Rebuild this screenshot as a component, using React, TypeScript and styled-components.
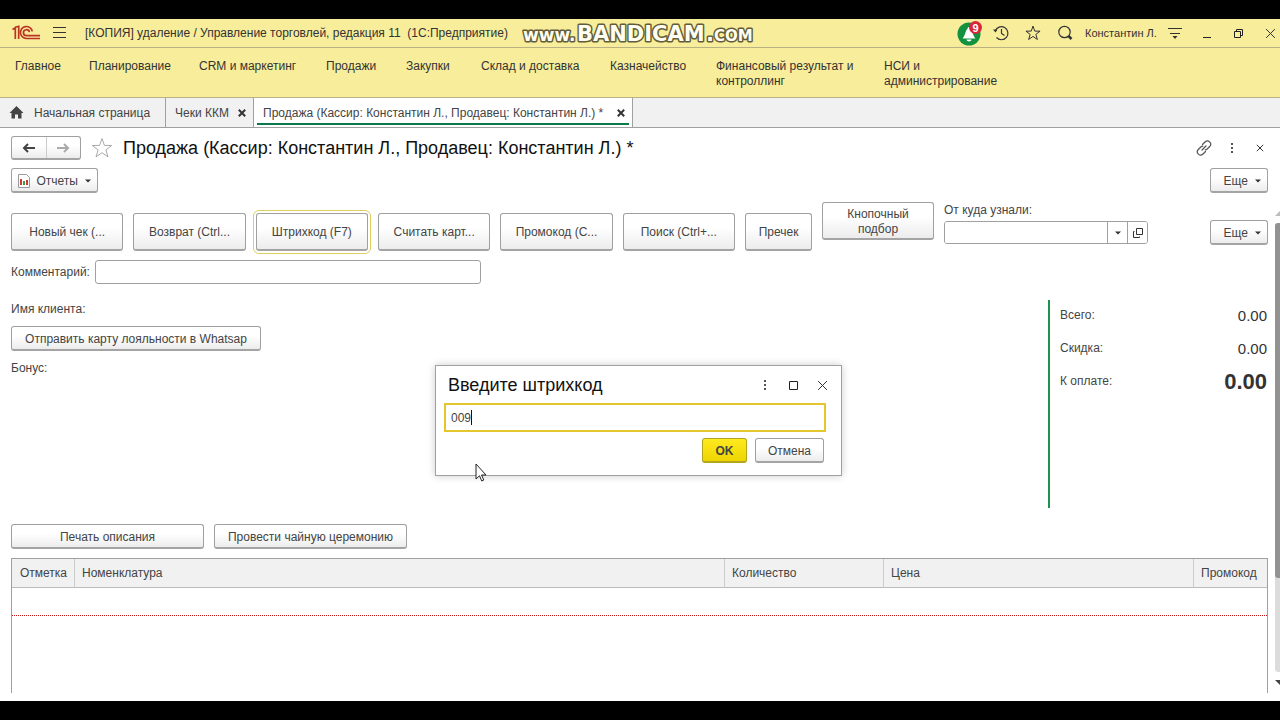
import React from 'react';
import styled, { createGlobalStyle, css } from 'styled-components';

const line = '#a0a0a0';

const Global = createGlobalStyle`
  * { box-sizing: border-box; }
  body { margin: 0; background: #000; }
  body, button, input { font-family: "Liberation Sans", Arial, sans-serif; font-size: 12px; line-height: 15px; color: #444; }
  a { color: inherit; text-decoration: none; }
  svg { display: block; flex: none; }
`;

const Screen = styled.div`
  height: 100vh;
  padding: 19px 0;
  display: flex;
  flex-direction: column;
  overflow: hidden;
`;

const Titlebar = styled.header`
  position: relative;
  display: flex;
  flex: none;
  align-items: center;
  height: 29px;
  padding-left: 12px;
  background: #f8ed9b;
  border-bottom: 1px solid #b9b184;
  color: #333;
`;
const IconButton = styled.button<{ $w?: number; $edge?: boolean }>`
  display: flex;
  flex: none;
  align-items: center;
  justify-content: ${p => (p.$edge ? 'flex-end' : 'center')};
  width: ${p => p.$w ?? 32}px;
  height: 24px;
  padding: 0 ${p => (p.$edge ? 4 : 0)}px 0 0;
  border: 0;
  background: none;
  color: #333;
`;
const AppName = styled.div`
  flex: 1;
  padding: 1px 0 0 7px;
  white-space: pre;
`;
const Watermark = styled.div`
  position: absolute;
  left: 522px;
  top: 2px;
`;
const User = styled.div`
  width: 78px;
  padding-left: 4px;
  font-size: 11px;
  white-space: nowrap;
`;

const Sections = styled.nav`
  display: grid;
  grid-template-columns: 74px 110px 127px 80px 75px 129px 106px 168px 1fr;
  height: 50px;
  flex: none;
  padding: 11px 15px 0;
  background: #f8ed9b;
  border-bottom: 1px solid #b9b184;
  color: #333;
`;
const Section = styled.a`
  white-space: pre;
`;

const Tabs = styled.div`
  display: flex;
  flex: none;
  height: 30px;
  background: #f1f1f1;
  border-bottom: 1px solid ${line};
`;
const Tab = styled.div<{ $w: number; $active?: boolean; $home?: boolean }>`
  position: relative;
  display: flex;
  align-items: center;
  justify-content: ${p => (p.$home ? 'flex-start' : 'space-between')};
  gap: 9px;
  min-width: ${p => p.$w}px;
  padding: 1px 7px 0 9px;
  border-right: 1px solid ${line};
  white-space: nowrap;
  ${p => p.$active && css`
    background: #fff;
    &::after { content: ''; position: absolute; left: 3px; right: 3px; bottom: 2px; height: 2px; background: #0a7a4a; }
  `}
`;

const Page = styled.main`
  position: relative;
  flex: 1;
  min-height: 0;
  display: flex;
  flex-direction: column;
  background: #fff;
  padding: 8px 12px 8px 11px;
`;
const Row = styled.div<{ $gap?: number; $mt?: number }>`
  display: flex;
  flex: none;
  align-items: center;
  gap: ${p => p.$gap ?? 10}px;
  margin-top: ${p => p.$mt ?? 0}px;
`;
const Spacer = styled.div`flex: 1;`;

const Button = styled.button<{ $w?: number; $tall?: boolean; $primary?: boolean; $focus?: boolean; $menu?: boolean }>`
  display: flex;
  flex: none;
  align-items: center;
  justify-content: ${p => (p.$menu ? 'flex-end' : 'center')};
  gap: 7px;
  width: ${p => (p.$w ? p.$w + 'px' : 'auto')};
  height: ${p => (p.$tall ? 38 : 25)}px;
  padding: 2px 6px 0;
  border: 1px solid ${line};
  border-bottom: 2px solid #a4a4a4;
  border-radius: 3px;
  background: linear-gradient(#fff 40%, #ececec);
  white-space: pre-line;
  ${p => p.$primary && css`
    background: linear-gradient(#ffea20, #edd500);
    border-color: #b5a51c;
    font-weight: bold;
  `}
  ${p => p.$focus && css`outline: 1px solid #dccf60; outline-offset: 2px;`}
`;
const NavPair = styled.div`
  display: flex;
  width: 70px;
  height: 24px;
  border: 1px solid ${line};
  border-bottom: 2px solid #a4a4a4;
  border-radius: 3px;
  background: linear-gradient(#fff 40%, #ececec);
`;
const NavButton = styled.button`
  flex: 1;
  display: flex;
  align-items: center;
  justify-content: center;
  padding: 0;
  border: 0;
  background: none;
  & + & { border-left: 1px solid #ccc; }
`;
const Title = styled.h1`
  margin: 0;
  color: #111;
  font-size: 18px;
  line-height: 24px;
  font-weight: normal;
  white-space: nowrap;
`;
const TextInput = styled.input`
  width: 386px;
  height: 24px;
  padding: 0 6px;
  border: 1px solid ${line};
  border-radius: 3px;
`;
const Toolbar = styled.div`
  display: flex;
  flex: none;
  align-items: flex-start;
  gap: 10px;
  height: 52px;
  margin-top: 9px;
`;
const Actions = styled.div`
  display: grid;
  grid-template-columns: repeat(6, 1fr) 67px;
  gap: 10px;
  width: 801px;
  padding-top: 11px;
`;
const Field = styled.label`
  display: flex;
  flex-direction: column;
  gap: 3px;
  padding-top: 1px;
`;
const Combo = styled.div`
  display: flex;
  width: 204px;
  height: 23px;
  border: 1px solid ${line};
  border-radius: 3px;
  overflow: hidden;
`;
const ComboInput = styled.input`
  flex: 1;
  min-width: 0;
  border: 0;
  padding: 0 6px;
`;
const ComboButton = styled.button`
  width: 20px;
  display: flex;
  align-items: center;
  justify-content: center;
  padding: 0;
  border: 0;
  border-left: 1px solid ${line};
  background: #fff;
`;

const Summary = styled.section`
  display: flex;
  flex: none;
  justify-content: space-between;
  height: 208px;
  margin-top: 16px;
`;
const Client = styled.div`
  display: flex;
  flex-direction: column;
  align-items: flex-start;
  gap: 9px;
  padding-top: 1px;
  line-height: 16px;
`;
const Totals = styled.dl`
  width: 220px;
  margin: 0;
  padding: 0 1px 0 10px;
  border-left: 2px solid #1d9150;
`;
const Total = styled.div<{ $big?: boolean }>`
  display: flex;
  align-items: center;
  justify-content: space-between;
  height: 33px;
  padding-bottom: 2px;
  dt { margin: 0; }
  dd { margin: 0; color: #333; font-size: ${p => (p.$big ? 22 : 15)}px; font-weight: ${p => (p.$big ? 'bold' : 'normal')}; }
`;

const TableBox = styled.div`
  flex: 1;
  min-height: 0;
  margin-top: 9px;
  border: 1px solid ${line};
  border-bottom: 0;
`;
const Table = styled.table`
  width: 100%;
  border-collapse: separate;
  border-spacing: 0;
  table-layout: fixed;
  th {
    height: 29px;
    padding: 0 8px;
    text-align: left;
    font-weight: normal;
    background: #f1f1f1;
    border-bottom: 1px solid #bbb;
  }
  th + th { border-left: 1px solid #ccc; padding: 0 7px; }
  td { height: 28px; padding: 0; border-bottom: 1px dotted #c01818; }
`;

const Scrollbar = styled.div`
  position: absolute;
  right: 0;
  top: 83px;
  bottom: 16px;
  width: 5px;
  display: flex;
  flex-direction: column;
`;
const Track = styled.div`
  flex: 1;
  margin: 7px 0 8px;
  border-radius: 3px 0 0 3px;
  background: #dcdcdc;
`;
const Thumb = styled.div`
  height: 79%;
  border-radius: 3px 0 0 3px;
  background: #929292;
`;

const Dialog = styled.div`
  position: absolute;
  left: 435px;
  top: 237px;
  width: 407px;
  height: 111px;
  padding: 1px 15px 0 8px;
  background: #fff;
  border: 1px solid ${line};
  box-shadow: 0 0 8px rgba(0, 0, 0, 0.2);
`;
const DialogHead = styled.div`
  display: flex;
  align-items: center;
  height: 36px;
  padding-left: 4px;
  margin-right: -11px;
`;
const CodeField = styled.div`
  position: relative;
`;
const TextCaret = styled.span`
  position: absolute;
  left: 27px;
  top: 7px;
  width: 1px;
  height: 15px;
  background: #111;
`;
const CodeInput = styled.input`
  display: block;
  width: 100%;
  height: 29px;
  padding: 0 5px;
  border: 2px solid #e6c62e;
  outline: 0;
`;
const DialogFoot = styled.div`
  display: flex;
  justify-content: flex-end;
  gap: 8px;
  padding: 6px 2px 0 0;
`;
const Pointer = styled.svg`
  position: absolute;
  left: 475px;
  top: 335px;
`;

const Caret = () => (
  <svg width="6" height="4" viewBox="0 0 6 4"><path d="M0 0.500h6L3 3.500z" fill="#333" /></svg>
);
const Cross = ({ size = 8, w = 1 }: { size?: number; w?: number }) => (
  <svg width={size} height={size} viewBox="0 0 10 10" fill="none" stroke="#333" strokeWidth={w * 10 / size}><path d="M1 1l8 8M9 1L1 9" /></svg>
);
const Dots = () => (
  <svg width="4" height="12" viewBox="0 0 4 12" fill="#555"><rect x="1" y="1" width="2" height="2" /><rect x="1" y="5" width="2" height="2" /><rect x="1" y="9" width="2" height="2" /></svg>
);
const Arrow = ({ color, flip }: { color: string; flip?: boolean }) => (
  <svg width="14" height="10" viewBox="0 0 14 10" fill="none" stroke={color} strokeWidth="2"><path d={flip ? 'M1 5h11M8 1l4 4-4 4' : 'M13 5H2M6 1L2 5l4 4'} /></svg>
);
const Star = ({ size, color }: { size: number; color: string }) => (
  <svg width={size} height={size} viewBox="0 0 22 22" fill="none" stroke={color} strokeWidth={22 / size}><path d="M11 1.500l2.400 6.900 7.300.1-5.800 4.400 2.100 7-6-4.200-6 4.200 2.100-7L1.300 8.500l7.300-.1z" /></svg>
);
const Logo = () => (
  <svg width="28" height="16" viewBox="0 0 28 16" fill="none" stroke="#bb3524" strokeWidth="1.700">
    <path d="M.5 4.500L3.300 2.800V14M3 2.300L6.700 1.300V14" />
    <path d="M20.300 6.300A6 6 0 1 0 14.500 13.500H28" />
    <path d="M17.400 7.200A3 3 0 1 0 14.500 10.700H28" />
  </svg>
);

const sections = ['Главное', 'Планирование', 'CRM и маркетинг', 'Продажи', 'Закупки', 'Склад и доставка', 'Казначейство', 'Финансовый результат и\nконтроллинг', 'НСИ и\nадминистрирование'];
const actions = ['Новый чек (...', 'Возврат (Ctrl...', 'Штрихкод (F7)', 'Считать карт...', 'Промокод (С...', 'Поиск (Ctrl+...', 'Пречек'];

export default function App() {
  return (
    <Screen>
      <Global />
      <Titlebar>
        <Logo />
        <IconButton $w={38} aria-label="Меню">
          <svg width="13" height="12" viewBox="0 0 13 12" stroke="#333"><path d="M0 .5h13M0 5.500h13M0 10.500h13" /></svg>
        </IconButton>
        <AppName>[КОПИЯ] удаление / Управление торговлей, редакция 11  (1С:Предприятие)</AppName>
        <Watermark>
          <svg width="240" height="26" viewBox="0 0 240 26" fontFamily="DejaVu Sans" fontWeight="bold" fill="#fffef0" stroke="#625d38" strokeWidth="3" paintOrder="stroke" strokeLinejoin="round">
            <text x="1" y="20" fontSize="17">www.</text>
            <text x="55" y="20" fontSize="21">BANDICAM</text>
            <text x="184" y="20" fontSize="21" fontVariant="small-caps">.com</text>
          </svg>
        </Watermark>
        <IconButton aria-label="Оповещения">
          <svg width="26" height="26" viewBox="0 0 26 26">
            <circle cx="13" cy="14" r="11.500" fill="#12913f" />
            <path d="M13 7c-1 0-1.300.8-1.300 1.500C9.500 10 9.500 15 6.500 18.500h13c-3-3.500-3-8.500-5.200-10C14.300 7.800 14 7 13 7zM10.500 19.500h5c0 2.500-5 2.500-5 0z" fill="#fff" />
            <circle cx="19.500" cy="7.500" r="6.500" fill="#d9263a" />
            <text x="19.500" y="11.500" fontSize="11" fontWeight="bold" textAnchor="middle" fill="#fff">9</text>
          </svg>
        </IconButton>
        <IconButton aria-label="История">
          <svg width="16" height="16" viewBox="0 0 16 16" fill="none" stroke="#333" strokeWidth="1.200"><path d="M2.300 6A6.500 6.500 0 1 1 3.500 12.500M8.500 4v4.500l3 2" /><path d="M0 4.500h4.500L2.500 7.500z" fill="#333" stroke="none" /></svg>
        </IconButton>
        <IconButton aria-label="Избранное"><Star size={16} color="#333" /></IconButton>
        <IconButton aria-label="Поиск">
          <svg width="16" height="16" viewBox="0 0 16 16" fill="none" stroke="#333"><circle cx="7.500" cy="7" r="5.700" strokeWidth="1.200" /><path d="M11.500 11l3 3" strokeWidth="2.500" /></svg>
        </IconButton>
        <User>Константин Л.</User>
        <IconButton aria-label="Сервис">
          <svg width="14" height="14" viewBox="0 0 14 14"><path d="M0 2.500h14M2 7.500h10" stroke="#333" strokeWidth="1" /><path d="M4.500 10h5L7 13z" fill="#333" /></svg>
        </IconButton>
        <IconButton aria-label="Свернуть"><svg width="8" height="9" viewBox="0 0 8 9"><path d="M0 8.500h8" stroke="#222" /></svg></IconButton>
        <IconButton aria-label="Восстановить">
          <svg width="10" height="10" viewBox="0 0 10 10" fill="none" stroke="#222"><path d="M.5 3.500h6v6h-6zM2.500 3.500v-2h6v6h-2" /></svg>
        </IconButton>
        <IconButton $w={25} $edge aria-label="Закрыть"><Cross size={11} /></IconButton>
      </Titlebar>

      <Sections>{sections.map(s => <Section href="#" key={s}>{s}</Section>)}</Sections>

      <Tabs>
        <Tab $w={166} $home>
          <svg width="16" height="14" viewBox="0 0 16 14" fill="#444"><path d="M7.500 0l7 7h-2v5.500H9V8.500H6v4H2.500V7h-2z" /></svg>
          Начальная страница
        </Tab>
        <Tab $w={88}>Чеки ККМ <Cross w={2} /></Tab>
        <Tab $w={379} $active>Продажа (Кассир: Константин Л., Продавец: Константин Л.) * <Cross w={2} /></Tab>
      </Tabs>

      <Page>
        <Row>
          <NavPair>
            <NavButton aria-label="Назад"><Arrow color="#444" /></NavButton>
            <NavButton aria-label="Вперед"><Arrow color="#aaa" flip /></NavButton>
          </NavPair>
          <Star size={22} color="#aaa" />
          <Title>Продажа (Кассир: Константин Л., Продавец: Константин Л.) *</Title>
          <Spacer />
          <IconButton $w={16} aria-label="Ссылка">
            <svg width="16" height="16" viewBox="0 0 16 16" fill="none" stroke="#555" strokeWidth="1.200" strokeLinecap="round"><path d="M6.500 4.500L9 2a3.100 3.100 0 0 1 4.700 4.500l-2.500 2.500a3 3 0 0 1-2 .8M9.500 11.500L7 14a3.100 3.100 0 0 1-4.700-4.500L4.800 7a3 3 0 0 1 2-.8M6 10l4-4" /></svg>
          </IconButton>
          <IconButton $w={20} aria-label="Действия"><Dots /></IconButton>
          <IconButton $w={16} aria-label="Закрыть форму"><Cross size={8} /></IconButton>
        </Row>
        <Row $mt={8}>
          <Button $w={87} $menu>
            <svg width="12" height="14" viewBox="0 0 12 14"><path d="M.5.5h8l3 3v10H.5z" fill="#fff" stroke="#999" /><path d="M2 5h2v6H2z" fill="#cc3b30" /><path d="M5 7h2v4H5z" fill="#3d9a45" /><path d="M8 6h2v5H8z" fill="#cc3b30" /></svg>
            Отчеты <Caret />
          </Button>
          <Spacer />
          <Button $w={58} $menu>Еще <Caret /></Button>
        </Row>
        <Toolbar>
          <Actions>
            {actions.map((a, i) => <Button key={a} $tall $focus={i === 2}>{a}</Button>)}
          </Actions>
          <Button $tall $w={112}>{'Кнопочный\nподбор'}</Button>
          <Field>
            От куда узнали:
            <Combo>
              <ComboInput />
              <ComboButton aria-label="Выбрать"><Caret /></ComboButton>
              <ComboButton aria-label="Открыть">
                <svg width="10" height="10" viewBox="0 0 10 10" fill="none" stroke="#333"><path d="M3.500.5h6v6h-6zM1.500 3.500h-1v6h6v-1" /></svg>
              </ComboButton>
            </Combo>
          </Field>
          <Spacer />
          <Row $mt={18}><Button $w={58} $menu>Еще <Caret /></Button></Row>
        </Toolbar>
        <Row as="label" $gap={5} $mt={6}>Комментарий:<TextInput /></Row>
        <Summary>
          <Client>
            <span>Имя клиента:</span>
            <Button $w={250}>Отправить карту лояльности в Whatsap</Button>
            <span>Бонус:</span>
          </Client>
          <Totals>
            <Total><dt>Всего:</dt><dd>0.00</dd></Total>
            <Total><dt>Скидка:</dt><dd>0.00</dd></Total>
            <Total $big><dt>К оплате:</dt><dd>0.00</dd></Total>
          </Totals>
        </Summary>
        <Row $mt={16}>
          <Button $w={193}>Печать описания</Button>
          <Button $w={193}>Провести чайную церемонию</Button>
        </Row>
        <TableBox>
          <Table>
            <colgroup><col width="62" /><col /><col width="159" /><col width="310" /><col width="74" /></colgroup>
            <thead><tr><th>Отметка</th><th>Номенклатура</th><th>Количество</th><th>Цена</th><th>Промокод</th></tr></thead>
            <tbody><tr><td colSpan={5} /></tr></tbody>
          </Table>
        </TableBox>
        <Scrollbar>
          <svg width="5" height="5" viewBox="0 0 5 5"><path d="M0 5l5-5v5z" fill="#bbb" /></svg>
          <Track><Thumb /></Track>
          <svg width="5" height="5" viewBox="0 0 5 5"><path d="M0 0h5v5z" fill="#444" /></svg>
        </Scrollbar>
        <Dialog role="dialog" aria-label="Введите штрихкод">
          <DialogHead>
            <Title as="h2">Введите штрихкод</Title>
            <Spacer />
            <IconButton $w={29} aria-label="Действия"><Dots /></IconButton>
            <IconButton $w={29} aria-label="Развернуть"><svg width="9" height="9" viewBox="0 0 9 9"><path d="M.5.5h8v8h-8z" fill="none" stroke="#222" /></svg></IconButton>
            <IconButton $w={29} aria-label="Закрыть окно"><Cross size={11} /></IconButton>
          </DialogHead>
          <CodeField>
            <CodeInput aria-label="Штрихкод" defaultValue="009" />
            <TextCaret />
          </CodeField>
          <DialogFoot>
            <Button $w={45} $primary>OK</Button>
            <Button $w={69}>Отмена</Button>
          </DialogFoot>
        </Dialog>
        <Pointer width="12" height="19" viewBox="0 0 12 19"><path d="M1 1v15l3.500-3.200 2.300 5.200 2-1-2.300-5H11z" fill="#fff" stroke="#222" /></Pointer>
      </Page>
    </Screen>
  );
}
